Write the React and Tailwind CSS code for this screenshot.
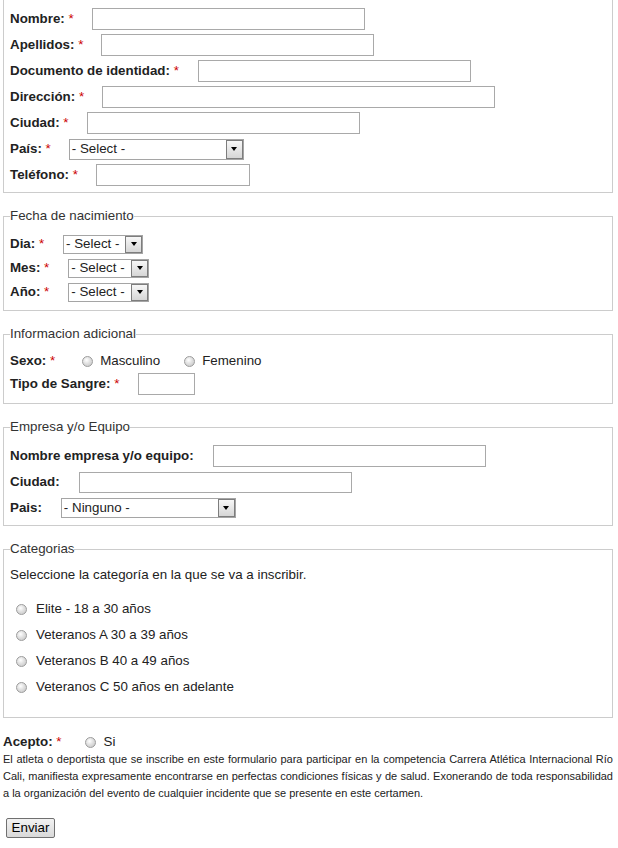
const Req = () => <span className="font-normal text-[#c00]">*</span>;

const Input = ({ className }) => (
  <input type="text" className={"border border-[#a9a9a9] bg-white outline-none " + className} />
);

const Select = ({ className, text }) => (
  <div className={"flex items-stretch border border-[#a5a5a5] bg-white " + className}>
    <span className="flex-1 pl-[2px] text-[13.33px] leading-none flex items-center text-[#222] whitespace-nowrap overflow-hidden">
      {text}
    </span>
    <span className="w-[17px] flex items-center justify-center border border-[#7d7d7d] bg-gradient-to-b from-[#f7f7f7] to-[#d6d6d6]">
      <span className="w-0 h-0 border-l-[3.5px] border-r-[3.5px] border-t-[4px] border-l-transparent border-r-transparent border-t-black" />
    </span>
  </div>
);

const Radio = ({ className = "" }) => (
  <span
    className={
      "inline-block w-[11px] h-[11px] rounded-full border border-[#9c9c9c] bg-[radial-gradient(circle_at_40%_35%,#ffffff_0%,#e0e0e0_45%,#c2c2c2_100%)] " +
      className
    }
  />
);

const Row = ({ h = "h-[26px]", children }) => (
  <div className={"flex items-center " + h}>{children}</div>
);

const Label = ({ children, req = true }) => (
  <span className="font-bold text-[13.33px] text-[#222] whitespace-nowrap">
    {children}
    {req && (
      <>
        {" "}
        <Req />
      </>
    )}
  </span>
);

const Fieldset = ({ legend, className = "", children }) => (
  <fieldset className={"mt-[15px] border border-[#cccccc] px-[6px] " + className}>
    <legend className="text-[13.33px] leading-[16px] text-[#333]">{legend}</legend>
    {children}
  </fieldset>
);

export default function App() {
  return (
    <div className="bg-white min-h-[848px] font-['Liberation_Sans',Arial,sans-serif] text-[#333]">
      <div className="ml-[3px] w-[610px]">
        {/* datos personales */}
        <div className="border border-t-0 border-[#cccccc] px-[6px] pt-[6px] pb-[4px]">
          <Row>
            <Label>Nombre:</Label>
            <Input className="ml-[18px] w-[273px] h-[22px]" />
          </Row>
          <Row>
            <Label>Apellidos:</Label>
            <Input className="ml-[18px] w-[273px] h-[22px]" />
          </Row>
          <Row>
            <Label>Documento de identidad:</Label>
            <Input className="ml-[19px] w-[273px] h-[22px]" />
          </Row>
          <Row>
            <Label>Dirección:</Label>
            <Input className="ml-[18px] w-[393px] h-[22px]" />
          </Row>
          <Row>
            <Label>Ciudad:</Label>
            <Input className="ml-[18px] w-[273px] h-[22px]" />
          </Row>
          <Row>
            <Label>País:</Label>
            <Select className="ml-[18px] w-[175px] h-[21px]" text="- Select -" />
          </Row>
          <Row>
            <Label>Teléfono:</Label>
            <Input className="ml-[18px] w-[154px] h-[22px]" />
          </Row>
        </div>

        <Fieldset legend="Fecha de nacimiento" className="pt-[8px] pb-[6px]">
          <Row h="h-[24px]">
            <Label>Dia:</Label>
            <Select className="ml-[19px] w-[80px] h-[19px]" text="- Select -" />
          </Row>
          <Row h="h-[24px]">
            <Label>Mes:</Label>
            <Select className="ml-[19px] w-[81px] h-[19px]" text="- Select -" />
          </Row>
          <Row h="h-[24px]">
            <Label>Año:</Label>
            <Select className="ml-[19px] w-[81px] h-[19px]" text="- Select -" />
          </Row>
        </Fieldset>

        <Fieldset legend="Informacion adicional" className="pt-[8px] pb-[7px]">
          <Row h="h-[22px]">
            <Label>Sexo:</Label>
            <Radio className="ml-[27px]" />
            <span className="ml-[7px] text-[13.33px] text-[#222]">Masculino</span>
            <Radio className="ml-[24px]" />
            <span className="ml-[7px] text-[13.33px] text-[#222]">Femenino</span>
          </Row>
          <Row h="h-[24px]">
            <Label>Tipo de Sangre:</Label>
            <Input className="ml-[19px] w-[57px] h-[22px]" />
          </Row>
        </Fieldset>

        <Fieldset legend="Empresa y/o Equipo" className="pt-[8px] pb-[4px]">
          <Row>
            <Label req={false}>Nombre empresa y/o equipo:</Label>
            <Input className="ml-[19px] w-[273px] h-[22px]" />
          </Row>
          <Row>
            <Label req={false}>Ciudad:</Label>
            <Input className="ml-[19px] w-[273px] h-[21px]" />
          </Row>
          <Row>
            <Label req={false}>Pais:</Label>
            <Select className="ml-[19px] w-[175px] h-[20px]" text="- Ninguno -" />
          </Row>
        </Fieldset>

        <Fieldset legend="Categorias" className="pt-[10px] pb-[17px]">
          <p className="text-[13.33px] leading-[16px] text-[#222]">
            Seleccione la categoría en la que se va a inscribir.
          </p>
          <div className="mt-[13px]">
            {[
              "Elite - 18 a 30 años",
              "Veteranos A 30 a 39 años",
              "Veteranos B 40 a 49 años",
              "Veteranos C 50 años en adelante",
            ].map((cat) => (
              <Row key={cat}>
                <Radio className="ml-[6px]" />
                <span className="ml-[9px] text-[13.33px] text-[#222]">{cat}</span>
              </Row>
            ))}
          </div>
        </Fieldset>

        <div className="mt-[15px] h-[18px] flex items-center">
          <Label>Acepto:</Label>
          <Radio className="ml-[23px]" />
          <span className="ml-[8px] text-[13.33px] text-[#222]">Si</span>
        </div>
        <p className="text-[11px] leading-[17px] text-[#222] text-justify">
          El atleta o deportista que se inscribe en este formulario para participar en la
          competencia Carrera Atlética Internacional Río Cali, manifiesta expresamente
          encontrarse en perfectas condiciones físicas y de salud. Exonerando de toda
          responsabilidad a la organización del evento de cualquier incidente que se presente
          en este certamen.
        </p>
        <button
          type="button"
          className="mt-[16px] ml-[3px] w-[49px] h-[20px] rounded-[2px] border border-[#707070] bg-gradient-to-b from-[#f2f2f2] to-[#d9d9d9] text-[13.33px] leading-none text-black"
        >
          Enviar
        </button>
      </div>
    </div>
  );
}
